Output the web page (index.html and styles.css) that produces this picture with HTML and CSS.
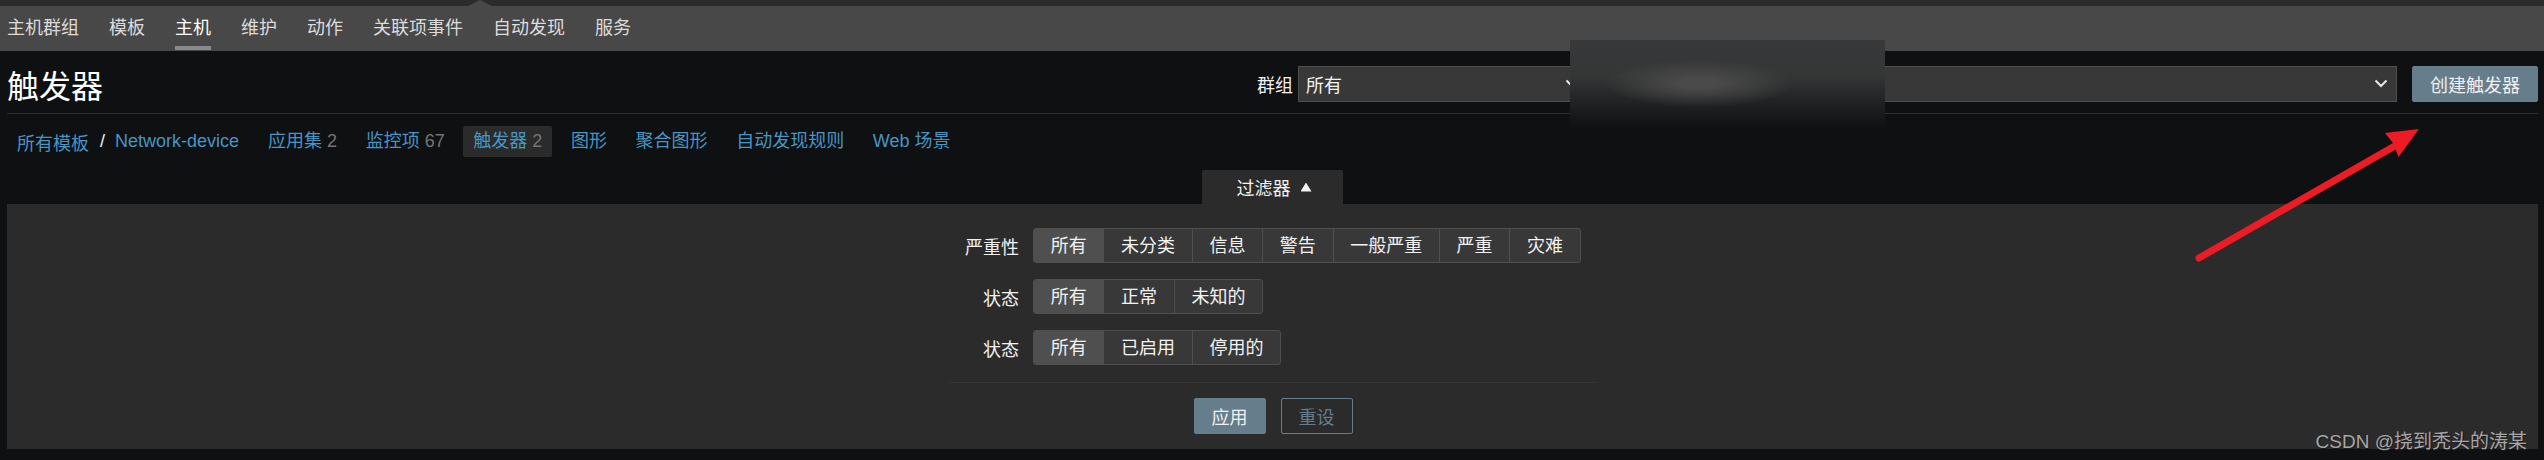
FILE: index.html
```html
<!DOCTYPE html>
<html lang="zh">
<head>
  <meta charset="UTF-8">
  <title>触发器</title>
  <link rel="stylesheet" href="styles.css">
</head>
<body>
  <div class="franja"><span class="franja-pico"></span></div>

  <nav class="menu">
    <a>主机群组</a>
    <a>模板</a>
    <a class="activo">主机</a>
    <a>维护</a>
    <a>动作</a>
    <a>关联项事件</a>
    <a>自动发现</a>
    <a>服务</a>
  </nav>

  <header class="cabecera">
    <h1>触发器</h1>
    <label class="etiqueta">群组</label>
    <div class="selector selector-grupo">
      <span>所有</span>
      <svg class="flecha" width="14" height="9" viewBox="0 0 14 9"><path d="M1.5 1.5 7 7l5.5-5.5" fill="none" stroke="#e8e8e8" stroke-width="2"/></svg>
    </div>
    <div class="selector selector-host">
      <span></span>
      <svg class="flecha" width="14" height="9" viewBox="0 0 14 9"><path d="M1.5 1.5 7 7l5.5-5.5" fill="none" stroke="#e8e8e8" stroke-width="2"/></svg>
    </div>
    <button class="boton boton-crear">创建触发器</button>
  </header>

  <div class="subnav">
    <a class="ruta">所有模板</a>
    <span class="barra">/</span>
    <a class="ruta-host">Network-device</a>
    <a class="pestana">应用集 <em>2</em></a>
    <a class="pestana">监控项 <em>67</em></a>
    <a class="pestana actual">触发器 <em>2</em></a>
    <a class="pestana">图形</a>
    <a class="pestana">聚合图形</a>
    <a class="pestana">自动发现规则</a>
    <a class="pestana">Web 场景</a>
  </div>

  <div class="filtro-tab"><span>过滤器</span><i class="tri"></i></div>

  <section class="filtro">
    <div class="fila">
      <span class="rotulo">严重性</span>
      <div class="grupo">
        <span class="sel">所有</span><span>未分类</span><span>信息</span><span>警告</span><span>一般严重</span><span>严重</span><span>灾难</span>
      </div>
    </div>
    <div class="fila">
      <span class="rotulo">状态</span>
      <div class="grupo">
        <span class="sel">所有</span><span>正常</span><span>未知的</span>
      </div>
    </div>
    <div class="fila">
      <span class="rotulo">状态</span>
      <div class="grupo">
        <span class="sel">所有</span><span>已启用</span><span>停用的</span>
      </div>
    </div>
    <div class="acciones">
      <button class="boton">应用</button>
      <button class="boton boton-borde">重设</button>
    </div>
  </section>

  <div class="difuminado"></div>

  <svg class="anotacion" width="2544" height="460" viewBox="0 0 2544 460">
    <line x1="2199" y1="258" x2="2400" y2="143" stroke="#ed1c24" stroke-width="7" stroke-linecap="round"/>
    <polygon points="2419,129 2385,133 2393,143 2398.5,157" fill="#ed1c24"/>
  </svg>

  <div class="marca">CSDN @挠到秃头的涛某</div>
</body>
</html>
```

FILE: styles.css
```css
* {
  box-sizing: border-box;
}

body {
  margin: 0;
  width: 2544px;
  height: 460px;
  overflow: hidden;
  position: relative;
  background: #0e1012;
  color: #f2f2f2;
  font-family: "Liberation Sans", "Noto Sans CJK SC", sans-serif;
  font-size: 18px;
}

.franja {
  height: 6px;
  background: #2b2b2b;
  position: relative;
}

.franja-pico {
  position: absolute;
  left: 468px;
  top: 0;
  width: 24px;
  height: 6px;
  background: #484848;
  clip-path: polygon(50% 0, 100% 100%, 0 100%);
}

.menu {
  display: flex;
  gap: 30px;
  height: 45px;
  padding: 0 7px;
  background: #484848;
  color: #dcdcdc;
  line-height: 24px;
}

.menu a {
  height: 44px;
  padding-top: 10px;
}

.menu .activo {
  color: #fff;
  border-bottom: 4px solid #8a8a8a;
}

.cabecera {
  display: flex;
  align-items: center;
  height: 63px;
  margin: 0 6px 0 7px;
  padding-top: 3px;
  border-bottom: 1px solid #2e2f31;
}

.cabecera h1 {
  margin: 0;
  font-size: 32px;
  font-weight: 400;
  color: #fff;
}

.etiqueta {
  margin-left: auto;
  margin-right: 5px;
}

.selector {
  display: flex;
  align-items: center;
  justify-content: space-between;
  height: 36px;
  padding: 0 8px 0 7px;
  background: #383838;
  border: 1px solid #4f4f4f;
  color: #f2f2f2;
}

.selector-grupo {
  width: 290px;
}

.selector-host {
  width: 809px;
}

.boton {
  height: 36px;
  padding: 0 17px;
  border: 1px solid #667e8c;
  border-radius: 2px;
  background: #667e8c;
  color: #f0f0f0;
  font: inherit;
}

.boton-crear {
  width: 126px;
  margin-left: 15px;
  padding: 0;
}

.subnav {
  display: flex;
  align-items: center;
  height: 43px;
  padding: 12px 0 0 17px;
  color: #4796c4;
}

.barra {
  margin: 0 10px 0 11px;
  color: #f2f2f2;
}

.ruta-host {
  margin-right: 19px;
}

.pestana {
  height: 31px;
  padding: 0 10px;
  margin-right: 8.6px;
  line-height: 31px;
  border-radius: 2px;
}

.pestana em {
  font-style: normal;
  color: #757575;
}

.actual {
  background: #2b2b2b;
}

.filtro-tab {
  display: flex;
  align-items: center;
  justify-content: center;
  gap: 10px;
  width: 141px;
  height: 34px;
  margin: 13px 0 0 1202px;
  padding-left: 3px;
  background: #2b2b2b;
  border-radius: 2px 2px 0 0;
}

.tri {
  width: 11px;
  height: 9px;
  background: #f2f2f2;
  clip-path: polygon(50% 0, 100% 100%, 0 100%);
}

.filtro {
  display: flex;
  flex-direction: column;
  gap: 16px;
  height: 245px;
  margin: 0 6px 0 7px;
  padding-top: 24px;
  background: #2b2b2b;
}

.fila {
  display: flex;
  align-items: center;
  gap: 14px;
}

.rotulo {
  width: 1012px;
  text-align: right;
}

.grupo {
  display: flex;
  height: 35px;
  background: #383838;
  border: 1px solid #4f4f4f;
  border-radius: 3px;
  overflow: hidden;
  line-height: 34px;
}

.grupo span {
  padding: 0 16.7px;
  border-left: 1px solid #4f4f4f;
}

.grupo span:first-child {
  border-left: none;
}

.grupo .sel {
  background: #4f4f4f;
}

.acciones {
  display: flex;
  justify-content: center;
  gap: 15px;
  width: 646px;
  margin: 1px 0 0 943px;
  padding-top: 15px;
  border-top: 1px solid #353535;
}

.acciones .boton {
  width: 72px;
  padding: 0;
}

.acciones .boton-borde {
  background: transparent;
  color: #667e8c;
}

.difuminado {
  position: absolute;
  left: 1570px;
  top: 40px;
  width: 315px;
  height: 90px;
  background:
    radial-gradient(ellipse 95px 24px at 41% 48%, #4a4a4a 20%, rgba(74, 74, 74, 0) 100%),
    linear-gradient(#38393a 0, #343535 40%, #17181a 85%, #0f1012 100%);
}

.anotacion {
  position: absolute;
  left: 0;
  top: 0;
}

.marca {
  position: absolute;
  right: 17px;
  top: 429px;
  font-size: 19px;
  line-height: 26px;
  color: #a6a6a6;
  text-shadow: 1px 1px 1px #1a1a1a;
}
```
